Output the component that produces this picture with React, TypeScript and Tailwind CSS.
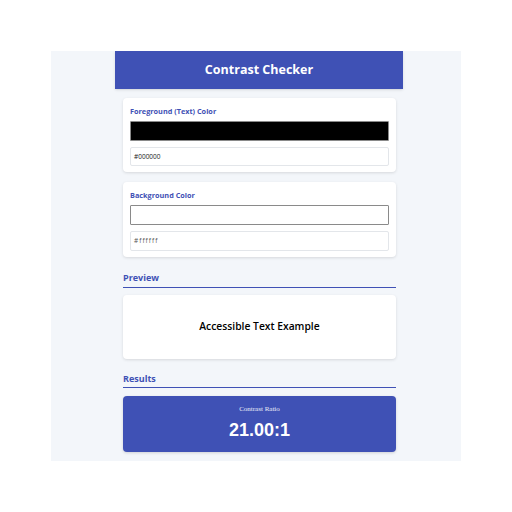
export default function App() {
  return (
    <div className="w-full h-[512px] bg-white pt-[51px] font-['Open_Sans','Noto_Sans',sans-serif]">
      <div className="ml-[51px] w-[410px] h-[410px] bg-[#f3f6fa] overflow-hidden">
        <div className="ml-[64px] w-[288px]">
          <header className="h-[38px] bg-[#3f51b5] flex items-center justify-center shadow-sm">
            <h1 className="text-white text-[12.5px] font-bold">Contrast Checker</h1>
          </header>
          <div className="px-2 pr-[7px] pt-[9px] flex flex-col">
            <div className="bg-white rounded-[4px] shadow-[0_1px_3px_rgba(0,0,0,0.12)] px-[7px] pt-[8px] pb-[6px]">
              <label className="block text-[7.3px] font-bold text-[#3f51b5] leading-[10px]">Foreground (Text) Color</label>
              <div className="mt-[5px] h-[20px] bg-black border border-[#8a8a8a] rounded-[1px]" />
              <div className="mt-[6px] h-[19px] border border-[#e3e6ea] rounded-[2px] flex items-center px-[3px] text-[6.5px] text-[#222]">#000000</div>
            </div>
            <div className="mt-[10px] bg-white rounded-[4px] shadow-[0_1px_3px_rgba(0,0,0,0.12)] px-[7px] pt-[8px] pb-[6px]">
              <label className="block text-[7.3px] font-bold text-[#3f51b5] leading-[10px]">Background Color</label>
              <div className="mt-[5px] h-[20px] bg-white border border-[#8a8a8a] rounded-[1px]" />
              <div className="mt-[6px] h-[20px] border border-[#e3e6ea] rounded-[2px] flex items-center px-[3px] text-[6.5px] text-[#555] tracking-[1px]">#ffffff</div>
            </div>
            <h2 className="mt-[15px] text-[9px] font-bold text-[#3f51b5] leading-[12px]">Preview</h2>
            <div className="mt-[3px] h-px bg-[#3f51b5]" />
            <div className="mt-[7px] h-[64px] bg-white rounded-[4px] shadow-[0_1px_3px_rgba(0,0,0,0.12)] flex items-center justify-center">
              <span className="text-[10.3px] font-semibold text-black">Accessible Text Example</span>
            </div>
            <h2 className="mt-[14px] text-[9px] font-bold text-[#3f51b5] leading-[12px]">Results</h2>
            <div className="mt-[2px] h-px bg-[#3f51b5]" />
            <div className="mt-[8px] h-[56px] bg-[#3f51b5] rounded-[4px] shadow-[0_1px_3px_rgba(0,0,0,0.15)] flex flex-col items-center pt-[8px]">
              <span className="text-[7px] text-white/90 font-['Liberation_Serif',serif] leading-[10px]">Contrast Ratio</span>
              <span className="mt-[5px] text-[18px] font-bold text-white leading-[22px] font-['Liberation_Sans',sans-serif]">21.00:1</span>
            </div>
          </div>
        </div>
      </div>
    </div>
  );
}
